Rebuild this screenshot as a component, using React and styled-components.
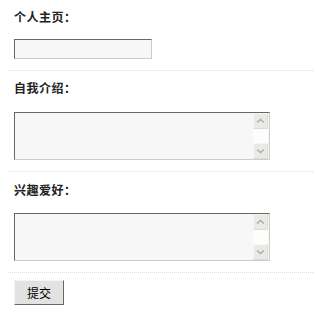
import React from "react";
import styled, { createGlobalStyle } from "styled-components";

const GlobalStyle = createGlobalStyle`
  html, body {
    margin: 0;
    padding: 0;
    background: #fff;
  }
  body {
    font-family: "Noto Sans CJK SC", "Liberation Sans", sans-serif;
    font-size: 12px;
    color: #333;
  }
`;

const Form = styled.form`
  padding: 0 2px 0 8px;
`;

const Row = styled.div`
  padding: ${(p) => p.$top || 9}px 6px 11px;
  border-bottom: 1px dotted #dcdcdc;
`;

const Label = styled.div`
  font-weight: bold;
  font-size: 12px;
  line-height: 16px;
  letter-spacing: 0.5px;
  color: #222;
`;

const TextInput = styled.input`
  display: block;
  box-sizing: border-box;
  width: 138px;
  height: 20px;
  margin: 14px 0 0;
  padding: 0 3px;
  background: #f7f7f7;
  border: 1px solid #ccc;
  border-top-color: #666;
  border-left-color: #666;
  outline: none;
`;

const AreaBox = styled.div`
  display: flex;
  box-sizing: border-box;
  width: 256px;
  height: 48px;
  margin-top: ${(p) => p.$gap || 16}px;
  background: #f7f7f7;
  border: 1px solid #ccc;
  border-top-color: #666;
  border-left-color: #666;
`;

const TextArea = styled.textarea`
  flex: 1;
  min-width: 0;
  padding: 2px 3px;
  background: transparent;
  border: none;
  resize: none;
  overflow: hidden;
  outline: none;
  font-family: "Liberation Sans", sans-serif;
  font-size: 12px;
`;

const ScrollBar = styled.div`
  display: flex;
  flex-direction: column;
  justify-content: space-between;
  width: 15px;
  margin-right: 1px;
  background: #fdfdfb;
`;

const ScrollButton = styled.div`
  display: flex;
  align-items: center;
  justify-content: center;
  box-sizing: border-box;
  height: 16px;
  background: #e9e9e5;
  border: 1px solid #dadad6;
  border-top-color: #f6f6f4;
  border-left-color: #f6f6f4;
`;

const Chevron = ({ down }) => (
  <svg width="9" height="6" viewBox="0 0 9 6">
    <path
      d={down ? "M1 1.5 L4.5 4.5 L8 1.5" : "M1 4.5 L4.5 1.5 L8 4.5"}
      fill="none"
      stroke="#aeaeaa"
      strokeWidth="1.6"
    />
  </svg>
);

const Actions = styled.div`
  padding: 7px 6px 0;
`;

const SubmitButton = styled.button`
  box-sizing: border-box;
  width: 50px;
  height: 25px;
  padding: 0;
  background: #e2e2e2;
  border: 1px solid #666;
  border-top-color: #f4f4f4;
  border-left-color: #f4f4f4;
  font-family: "Noto Sans CJK SC", sans-serif;
  font-size: 12px;
  color: #000;
`;

function Area({ gap }) {
  return (
    <AreaBox $gap={gap}>
      <TextArea />
      <ScrollBar>
        <ScrollButton>
          <Chevron />
        </ScrollButton>
        <ScrollButton>
          <Chevron down />
        </ScrollButton>
      </ScrollBar>
    </AreaBox>
  );
}

export default function App() {
  return (
    <>
      <GlobalStyle />
      <Form onSubmit={(e) => e.preventDefault()}>
        <Row>
          <Label>个人主页：</Label>
          <TextInput type="text" />
        </Row>
        <Row>
          <Label>自我介绍：</Label>
          <Area />
        </Row>
        <Row $top={10}>
          <Label>兴趣爱好：</Label>
          <Area gap={15} />
        </Row>
        <Actions>
          <SubmitButton type="submit">提交</SubmitButton>
        </Actions>
      </Form>
    </>
  );
}
